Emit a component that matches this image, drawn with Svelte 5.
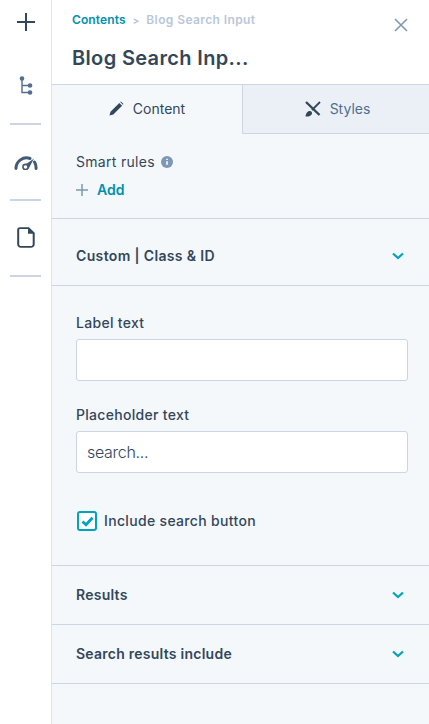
<script>
    const collapsedTop = "Custom | Class & ID";
    const collapsedBottom = ["Results", "Search results include"];
</script>

<main>
    <nav class="rail">
        <button class="rail-btn first" aria-label="Add">
            <svg width="20" height="20" viewBox="0 0 20 20"><path d="M10 1v18M1 10h18" stroke="#33475b" stroke-width="2" fill="none"/></svg>
        </button>
        <button class="rail-btn tree" aria-label="Tree">
            <svg width="14" height="20" viewBox="0 0 14 20" fill="#516f90"><circle cx="3" cy="2.500" r="2.300"/><circle cx="11" cy="9.500" r="2.300"/><circle cx="11" cy="16.500" r="2.300"/><path d="M3 3v13.500h8M3 9.500h8" stroke="#516f90" stroke-width="1.400" fill="none"/></svg>
        </button>
        <hr />
        <button class="rail-btn" aria-label="Performance">
            <svg width="24" height="16" viewBox="0 0 24 16"><path d="M2 14.500a10.500 10.500 0 0 1 14-10" stroke="#425b76" stroke-width="3" fill="none" stroke-linecap="round"/><path d="M20.500 8a10.500 10.500 0 0 1 1.500 6.500" stroke="#425b76" stroke-width="3" fill="none" stroke-linecap="round"/><path d="M10 11.500 20 4.500 14.500 15z" fill="#425b76"/><circle cx="11.500" cy="13" r="2.600" fill="#fff" stroke="#425b76" stroke-width="1.600"/></svg>
        </button>
        <hr />
        <button class="rail-btn page" aria-label="Page">
            <svg width="18" height="21" viewBox="0 0 18 22" preserveAspectRatio="none"><path d="M3 1.200h8.500l5.200 5.200V18a2.800 2.800 0 0 1-2.800 2.800H4A2.800 2.800 0 0 1 1.200 18V3A1.800 1.800 0 0 1 3 1.200z" fill="none" stroke="#33475b" stroke-width="2"/><path d="M11 1.500v5.500h5.500z" fill="#33475b"/></svg>
        </button>
        <hr />
    </nav>

    <section class="panel">
        <header>
            <div class="crumbs">
                <span class="link">Contents</span>
                <span class="sep">&gt;</span>
                <span class="current">Blog Search Input</span>
            </div>
            <h1>Blog Search Inp...</h1>
            <button class="close" aria-label="Close">
                <svg width="14" height="14" viewBox="0 0 14 14"><path d="M1 1l12 12M13 1 1 13" stroke="#7c98b6" stroke-width="1.600" fill="none"/></svg>
            </button>
        </header>

        <div class="tabs">
            <div class="tab active">
                <svg width="15" height="15" viewBox="0 0 15 15" fill="#33475b"><path d="M.5 14.500l1-3.800L10.300 2l2.800 2.800L4.300 13.500z"/><path d="M11.200 1.100l.7-.6 2.600 2.600-.6.700z"/></svg>
                Content
            </div>
            <div class="tab styles">
                <svg width="16" height="16" viewBox="0 0 16 16"><path d="M1 1l13.500 13" stroke="#33475b" stroke-width="2.400"/><path d="M15 1 7 9" stroke="#33475b" stroke-width="1.800"/><path d="M.5 15.500c.4-2.800 1.800-5.500 4.300-5.500 1.700 0 2.700 1.500 2.100 3-.7 1.900-3.500 2.800-6.400 2.500z" fill="#33475b"/></svg>
                Styles
            </div>
        </div>

        <div class="block rules">
            <div class="rules-label">
                Smart rules
                <svg width="12" height="12" viewBox="0 0 12 12"><circle cx="6" cy="6" r="6" fill="#7c98b6"/><path d="M6 5.200v3.600M6 2.700v1.300" stroke="#fff" stroke-width="1.600"/></svg>
            </div>
            <div class="add">
                <svg width="12" height="12" viewBox="0 0 12 12"><path d="M6 0v12M0 6h12" stroke="#7c98b6" stroke-width="1.500"/></svg>
                <span>Add</span>
            </div>
        </div>

        <div class="row top-row">
            <span>{collapsedTop}</span>
            <svg width="12" height="8" viewBox="0 0 12 8"><path d="M1 1.500l5 4.500 5-4.500" stroke="#00a4bd" stroke-width="2.200" fill="none"/></svg>
        </div>

        <div class="block fields">
            <label for="label-text">Label text</label>
            <input id="label-text" type="text" />
            <label for="placeholder-text" class="second">Placeholder text</label>
            <input id="placeholder-text" type="text" value="search..." />
            <div class="check">
                <span class="box">
                    <svg width="13" height="11" viewBox="0 0 13 11"><path d="M1.500 5.500l3.500 3.300 6.500-7" stroke="#00a4bd" stroke-width="2.800" fill="none"/></svg>
                </span>
                Include search button
            </div>
        </div>

        {#each collapsedBottom as title}
            <div class="row">
                <span>{title}</span>
                <svg width="12" height="8" viewBox="0 0 12 8"><path d="M1 1.500l5 4.500 5-4.500" stroke="#00a4bd" stroke-width="2.200" fill="none"/></svg>
            </div>
        {/each}
    </section>
</main>

<style>
    :global(body) {
        margin: 0;
    }

    main {
        display: flex;
        width: 429px;
        height: 724px;
        overflow: hidden;
        font-family: Inter, "Open Sans", sans-serif;
        color: #33475b;
        background: #f5f8fa;
    }

    button {
        border: 0;
        padding: 0;
        background: none;
        display: flex;
        align-items: center;
        justify-content: center;
    }

    .rail {
        width: 51px;
        flex: none;
        background: #fff;
        border-right: 1px solid #dfe3eb;
        display: flex;
        flex-direction: column;
        align-items: center;
    }

    .rail-btn {
        height: 74px;
        width: 100%;
    }

    .rail-btn.first {
        height: 44px;
    }

    .rail-btn.tree {
        height: 79px;
        padding-top: 4px;
    }

    .rail-btn.page {
        padding-bottom: 2px;
    }

    .rail hr {
        width: 31px;
        height: 2px;
        margin: 0;
        border: 0;
        background: #cbd6e2;
    }

    .panel {
        flex: 1;
        min-width: 0;
    }

    header {
        position: relative;
        height: 85px;
        box-sizing: border-box;
        padding: 12px 20px 0;
        background: #fff;
        border-bottom: 1px solid #cbd6e2;
    }

    .crumbs {
        display: flex;
        align-items: center;
        gap: 7px;
        font-size: 12px;
        font-weight: 600;
        line-height: 16px;
    }

    .link {
        color: #0091ae;
        letter-spacing: 0.1px;
    }

    .sep {
        color: #b0c1d4;
        font-size: 10px;
    }

    .current {
        color: #b9c8d9;
        letter-spacing: 0.4px;
    }

    h1 {
        margin: 16px 0 0;
        font-size: 20px;
        font-weight: 600;
        line-height: 28px;
        letter-spacing: 0.35px;
    }

    .close {
        position: absolute;
        top: 18px;
        right: 21px;
    }

    .tabs {
        display: flex;
        height: 49px;
    }

    .tab {
        display: flex;
        align-items: center;
        justify-content: center;
        gap: 9px;
        flex: 1;
        box-sizing: border-box;
        padding-bottom: 1px;
        font-size: 14px;
        background: #eaf0f6;
        border-bottom: 1px solid #cbd6e2;
        color: #516f90;
    }

    .tab.styles {
        padding-left: 3px;
    }

    .tab.active {
        flex: none;
        width: 191px;
        padding-bottom: 2px;
        background: #f5f8fa;
        border-bottom: 0;
        border-right: 1px solid #cbd6e2;
        color: #33475b;
    }

    .block {
        padding: 0 21px 0 24px;
    }

    .rules {
        height: 85px;
        padding-top: 19px;
        box-sizing: border-box;
        border-bottom: 1px solid #cbd6e2;
    }

    .rules-label {
        display: flex;
        align-items: center;
        gap: 6px;
        font-size: 14px;
        line-height: 18px;
        letter-spacing: 0.3px;
    }

    .add {
        display: flex;
        align-items: center;
        gap: 9px;
        margin-top: 10px;
        color: #0091ae;
        font-size: 14px;
        font-weight: 600;
        line-height: 18px;
    }

    .row {
        display: flex;
        align-items: center;
        justify-content: space-between;
        height: 59px;
        box-sizing: border-box;
        padding: 0 25px 0 24px;
        border-bottom: 1px solid #cbd6e2;
        font-size: 14px;
        font-weight: 600;
        letter-spacing: 0.25px;
    }

    .row span {
        margin-top: -2px;
    }

    .top-row {
        height: 67px;
        padding-top: 8px;
        letter-spacing: 0.35px;
    }

    .fields {
        height: 280px;
        box-sizing: border-box;
        padding-top: 28px;
        border-bottom: 1px solid #cbd6e2;
    }

    label {
        display: block;
        font-size: 14px;
        line-height: 18px;
        font-weight: 500;
        margin-bottom: 7px;
        letter-spacing: 0.3px;
    }

    label.second {
        margin-top: 25px;
    }

    input {
        display: block;
        width: 100%;
        height: 42px;
        box-sizing: border-box;
        padding: 0 10px;
        border: 1px solid #cbd6e2;
        border-radius: 3px;
        background: #fff;
        font: inherit;
        font-size: 16px;
        font-weight: 300;
        letter-spacing: -0.3px;
        color: #33475b;
    }

    .check {
        display: flex;
        align-items: center;
        gap: 7px;
        margin-top: 38px;
        font-size: 14px;
        font-weight: 500;
        line-height: 20px;
        letter-spacing: 0.33px;
    }

    .box {
        display: flex;
        align-items: center;
        justify-content: center;
        width: 20px;
        height: 20px;
        box-sizing: border-box;
        border: 2px solid #00a4bd;
        border-radius: 3px;
        background: #fff;
        margin-left: 1px;
    }
</style>
